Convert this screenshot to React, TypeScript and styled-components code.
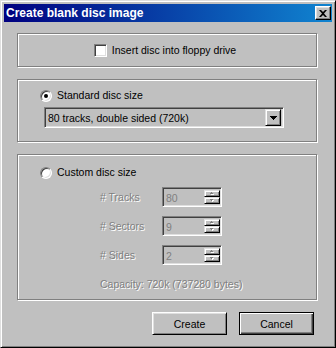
import styled, { createGlobalStyle } from "styled-components";

const GlobalStyle = createGlobalStyle`
    html, body {
        margin: 0;
        padding: 0;
        background: #c0c0c0;
    }
    body {
        font-family: "Liberation Sans", Arial, sans-serif;
        font-size: 10.5px;
        color: #000;
    }
`

const fields = [
    { id: 'tracks', label: '# Tracks', value: '80' },
    { id: 'sectors', label: '# Sectors', value: '9' },
    { id: 'sides', label: '# Sides', value: '2' },
]

const CloseIcon = () => (
    <svg width="8" height="7" viewBox="0 0 8 7">
        <path d="M0 0h2l2 2 2-2h2L5 3.5 8 7H6L4 5 2 7H0l3-3.5z" fill="#000" />
    </svg>
)

const DownArrow = () => (
    <svg width="7" height="4" viewBox="0 0 7 4" shapeRendering="crispEdges">
        <rect x="0" y="0" width="7" height="1" fill="#000" />
        <rect x="1" y="1" width="5" height="1" fill="#000" />
        <rect x="2" y="2" width="3" height="1" fill="#000" />
        <rect x="3" y="3" width="1" height="1" fill="#000" />
    </svg>
)

// tiny disabled arrow, grey with a white emboss
const SpinArrow = ({ up }: { up: boolean }) => {
    const top = up ? { x: 1, w: 1 } : { x: 0, w: 3 }
    const bottom = up ? { x: 0, w: 3 } : { x: 1, w: 1 }
    return (
        <svg width="5" height="4" viewBox="0 0 5 4" shapeRendering="crispEdges">
            <rect x={top.x + 1} y="1" width={top.w} height="1" fill="#fff" />
            <rect x={bottom.x + 1} y="2" width={bottom.w} height="1" fill="#fff" />
            <rect x={top.x} y="0" width={top.w} height="1" fill="#808080" />
            <rect x={bottom.x} y="1" width={bottom.w} height="1" fill="#808080" />
        </svg>
    )
}

const App = () => {
    return (
        <>
            <GlobalStyle />
            <Window>
                <TitleBar>
                    <Title>Create blank disc image</Title>
                    <CloseButton><CloseIcon /></CloseButton>
                </TitleBar>
                <Body>
                    <Group $height={34}>
                        <CenterRow>
                            <CheckBox />
                            <Label>Insert disc into floppy drive</Label>
                        </CenterRow>
                    </Group>
                    <Group $height={63}>
                        <GroupInner $top={9}>
                            <OptionRow>
                                <Radio $checked />
                                <Label>Standard disc size</Label>
                            </OptionRow>
                            <Combo>
                                <ComboText>80 tracks, double sided (720k)</ComboText>
                                <ComboButton><DownArrow /></ComboButton>
                            </Combo>
                        </GroupInner>
                    </Group>
                    <Group $height={146}>
                        <GroupInner $top={11}>
                            <OptionRow>
                                <Radio />
                                <Label>Custom disc size</Label>
                            </OptionRow>
                            <Fields>
                                {fields.map((f) => (
                                    <FieldRow key={f.id}>
                                        <DisabledLabel>{f.label}</DisabledLabel>
                                        <SpinEdit>
                                            <SpinValue>{f.value}</SpinValue>
                                            <Spinner>
                                                <SpinButton><SpinArrow up /></SpinButton>
                                                <SpinButton><SpinArrow up={false} /></SpinButton>
                                            </Spinner>
                                        </SpinEdit>
                                    </FieldRow>
                                ))}
                                <Capacity>Capacity: 720k (737280 bytes)</Capacity>
                            </Fields>
                        </GroupInner>
                    </Group>
                    <ButtonRow>
                        <PushButton>Create</PushButton>
                        <PushButton $default>Cancel</PushButton>
                    </ButtonRow>
                </Body>
            </Window>
        </>
    )
}

export default App;

const Window = styled.div`
    box-sizing: border-box;
    width: 336px;
    height: 348px;
    background: #c0c0c0;
    border: 1px solid;
    border-color: #dfdfdf #000 #000 #dfdfdf;
    box-shadow: inset 1px 1px #fff, inset -1px -1px #808080;
    padding: 3px;
    display: flex;
    flex-direction: column;
`

const TitleBar = styled.div`
    height: 18px;
    flex: none;
    display: flex;
    align-items: center;
    justify-content: space-between;
    padding: 0 1px 0 2px;
    background: linear-gradient(90deg, #000080, #1084d0);
`

const Title = styled.span`
    color: #fff;
    font-weight: bold;
    font-size: 12px;
    white-space: nowrap;
`

const CloseButton = styled.span`
    box-sizing: border-box;
    width: 16px;
    height: 14px;
    display: flex;
    align-items: center;
    justify-content: center;
    background: #c0c0c0;
    border: 1px solid;
    border-color: #fff #000 #000 #fff;
    box-shadow: inset -1px -1px #808080, inset 1px 1px #dfdfdf;
`

const Body = styled.div`
    display: flex;
    flex-direction: column;
    gap: 12px;
    padding: 11px 15px 0 13px;
`

const Group = styled.div<{ $height: number }>`
    box-sizing: border-box;
    height: ${(p) => p.$height}px;
    border: 1px solid #808080;
    box-shadow: inset 1px 1px #fff, 1px 1px #fff;
`

const CenterRow = styled.div`
    height: 100%;
    display: flex;
    align-items: center;
    justify-content: center;
    gap: 5px;
    padding-right: 4px;
`

const GroupInner = styled.div<{ $top: number }>`
    display: flex;
    flex-direction: column;
    padding: ${(p) => p.$top}px 0 0 22px;
`

const OptionRow = styled.div`
    height: 13px;
    display: flex;
    align-items: center;
    gap: 5px;
`

const Label = styled.span`
    white-space: nowrap;
    line-height: 13px;
`

const CheckBox = styled.span`
    box-sizing: border-box;
    width: 13px;
    height: 13px;
    background: #fff;
    border: 1px solid;
    border-color: #808080 #fff #fff #808080;
    box-shadow: inset 1px 1px #404040, inset -1px -1px #dfdfdf;
`

const Radio = styled.span<{ $checked?: boolean }>`
    box-sizing: border-box;
    position: relative;
    width: 12px;
    height: 12px;
    border-radius: 50%;
    background: #fff;
    border: 1px solid;
    border-color: #808080 #fff #fff #808080;
    box-shadow: inset 1px 1px #404040, inset -1px -1px #dfdfdf;

    &::after {
        content: "";
        display: ${(p) => (p.$checked ? 'block' : 'none')};
        position: absolute;
        left: 3px;
        top: 3px;
        width: 4px;
        height: 4px;
        border-radius: 50%;
        background: #000;
    }
`

const Combo = styled.div`
    box-sizing: border-box;
    width: 240px;
    height: 21px;
    margin: 5px 0 0 4px;
    display: flex;
    align-items: center;
    justify-content: space-between;
    padding: 2px;
    background: #c0c0c0;
    border: 1px solid;
    border-color: #808080 #fff #fff #808080;
    box-shadow: inset 1px 1px #404040, inset -1px -1px #dfdfdf;
`

const ComboText = styled.span`
    padding-left: 1px;
    white-space: nowrap;
`

const ComboButton = styled.span`
    box-sizing: border-box;
    width: 16px;
    height: 17px;
    display: flex;
    align-items: center;
    justify-content: center;
    background: #c0c0c0;
    border: 1px solid;
    border-color: #dfdfdf #000 #000 #dfdfdf;
    box-shadow: inset 1px 1px #fff, inset -1px -1px #808080;
`

const Fields = styled.div`
    display: flex;
    flex-direction: column;
    gap: 9px;
    margin-top: 8px;
    padding-left: 60px;
`

const FieldRow = styled.div`
    height: 20px;
    display: flex;
    align-items: center;
`

const DisabledLabel = styled.span`
    width: 62px;
    color: #808080;
    text-shadow: 1px 1px 0 #fff;
    white-space: nowrap;
`

const SpinEdit = styled.div`
    box-sizing: border-box;
    width: 60px;
    height: 20px;
    display: flex;
    justify-content: space-between;
    padding: 2px 1px 2px 2px;
    background: #c0c0c0;
    border: 1px solid;
    border-color: #808080 #fff #fff #808080;
    box-shadow: inset 1px 1px #404040, inset -1px -1px #dfdfdf;
`

const SpinValue = styled.span`
    color: #808080;
    line-height: 16px;
    padding-left: 1px;
`

const Spinner = styled.div`
    display: flex;
    flex-direction: column;
`

const SpinButton = styled.span`
    box-sizing: border-box;
    width: 16px;
    height: 8px;
    display: flex;
    align-items: center;
    justify-content: center;
    background: #c0c0c0;
    border: 1px solid;
    border-color: #dfdfdf #000 #000 #dfdfdf;
    box-shadow: inset 1px 1px #fff, inset -1px -1px #808080;
`

const Capacity = styled(DisabledLabel)`
    width: auto;
    line-height: 13px;
    margin-top: 4px;
`

const ButtonRow = styled.div`
    display: flex;
    justify-content: flex-end;
    gap: 12px;
    padding-right: 3px;
`

const PushButton = styled.button<{ $default?: boolean }>`
    box-sizing: border-box;
    width: 75px;
    height: 23px;
    padding: 0;
    font-family: "Liberation Sans", Arial, sans-serif;
    font-size: 10.5px;
    color: #000;
    background: #c0c0c0;
    border: 1px solid;
    border-color: ${(p) => (p.$default ? '#000' : '#fff #000 #000 #fff')};
    box-shadow: ${(p) => (p.$default
        ? 'inset 1px 1px #fff, inset -1px -1px #404040, inset -2px -2px #808080'
        : 'inset 1px 1px #dfdfdf, inset -1px -1px #808080')};
`
